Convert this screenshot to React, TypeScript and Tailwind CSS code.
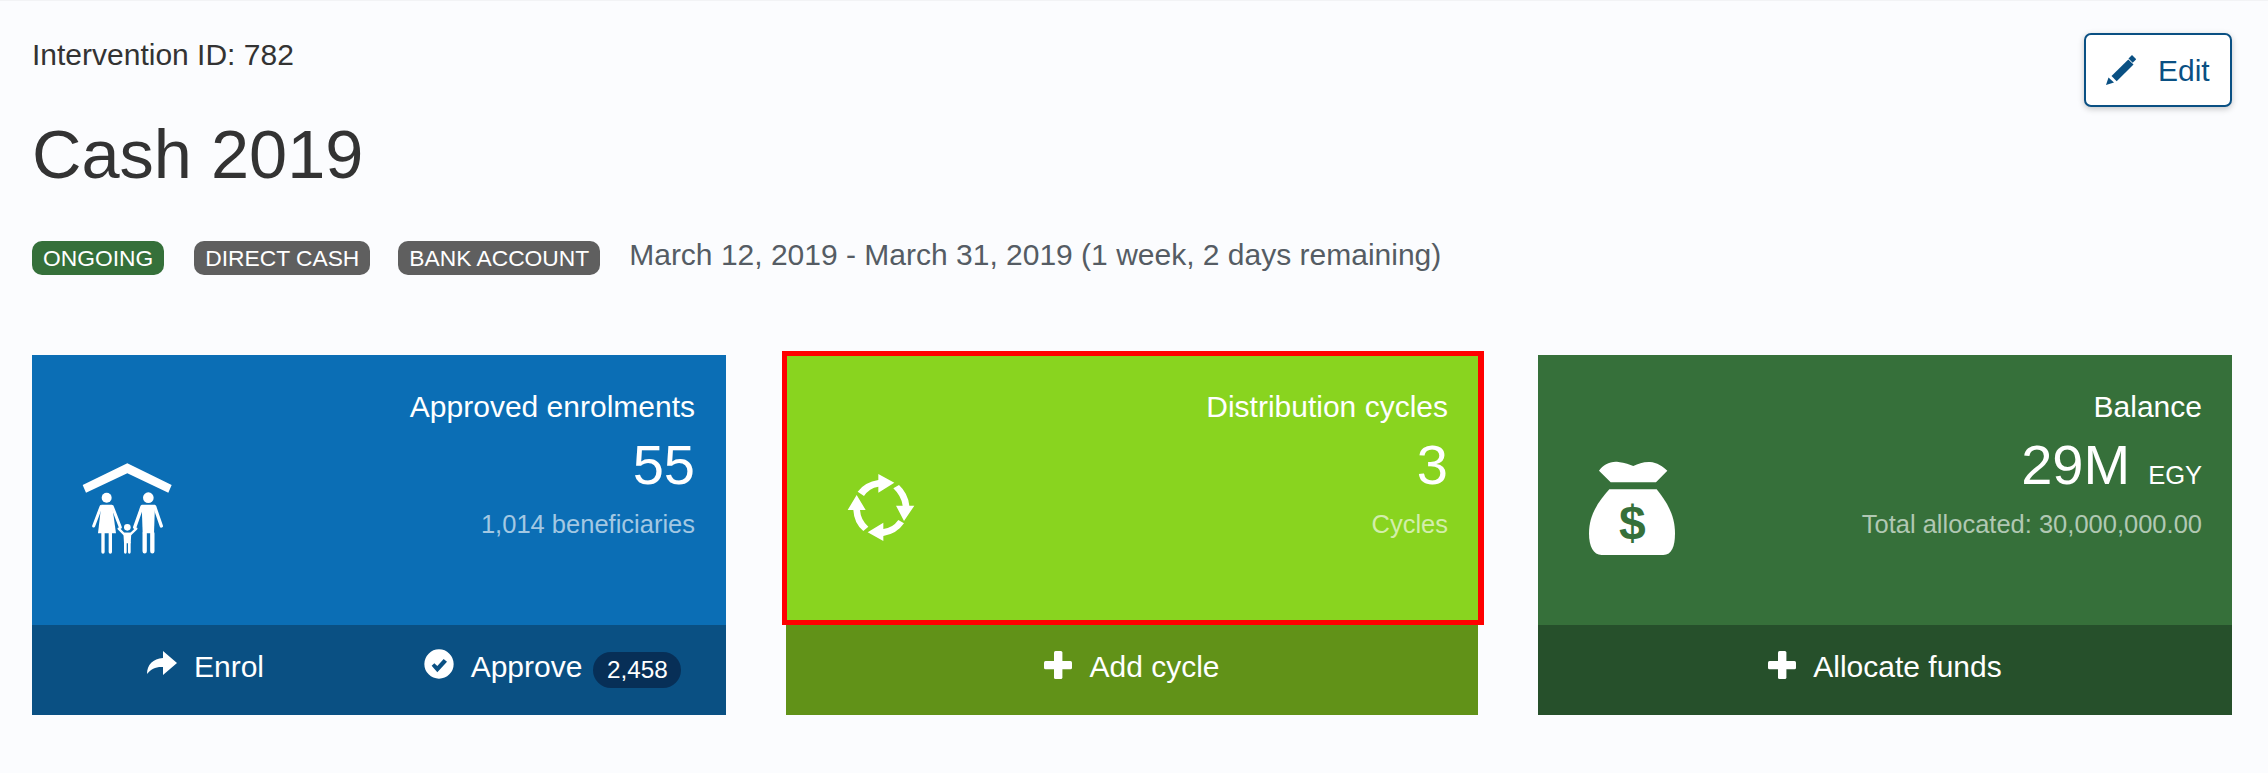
import React from 'react';

function PencilIcon() {
  return (
    <svg viewBox="0 0 30 30" className="h-[30px] w-[30px] fill-[#0a5083]">
      <path d="M0 30 L2.5 22.5 L8 27.5 Z" />
      <path d="M5.5 21 L22.3 4.5 L27.5 9.5 L10.7 26.2 Z" />
      <path d="M22.5 3.5 L26 0 L30.2 4.2 L26.7 7.8 Z" />
    </svg>
  );
}

function ShareIcon() {
  return (
    <svg viewBox="0 0 30 24" className="mb-[14px] h-[24px] w-[30px] fill-white">
      <path d="M30 12 L16 0 L16 7 C6 7.5 0 14 0 23 C4 18 9 15.5 16 16 L16 24 Z" />
    </svg>
  );
}

function CheckCircleIcon() {
  return (
    <svg viewBox="0 0 90 90" className="mb-[12px] h-[30px] w-[30px] fill-white">
      <path
        fillRule="evenodd"
        d="M45 1 A44 44 0 1 1 45 89 A44 44 0 1 1 45 1 Z M23 50 L31 43 L40 51 L59 30 L69 38 L40 70 Z"
      />
    </svg>
  );
}

function PlusIcon() {
  return (
    <svg viewBox="0 0 28 28" className="mb-[10px] h-[28px] w-[28px] fill-white">
      <rect x="10" y="0" width="8.4" height="28" rx="1.5" />
      <rect x="0" y="10" width="28" height="8.2" rx="1.5" />
    </svg>
  );
}

function FamilyIcon() {
  return (
    <svg viewBox="0 0 390 360" className="h-[120px] w-[130px] fill-white stroke-white">
      <path strokeWidth="0" d="M68 105 L202 40 L335 105 L325 128 L202 70 L78 128 Z" />
      {/* woman */}
      <circle cx="140" cy="143" r="15" strokeWidth="0" />
      <path strokeWidth="0" d="M124 164 L156 164 L168 250 L114 250 Z" />
      <path fill="none" strokeWidth="9" strokeLinecap="round" d="M123 170 L101 228 M157 170 L181 232" />
      <path fill="none" strokeWidth="10" strokeLinecap="round" d="M129 250 L129 306 M151 250 L151 306" />
      {/* man */}
      <circle cx="265" cy="143" r="16" strokeWidth="0" />
      <path strokeWidth="0" d="M245 164 L285 164 L282 250 L248 250 Z" />
      <path fill="none" strokeWidth="10" strokeLinecap="round" d="M246 170 L224 232 M284 170 L304 228" />
      <path fill="none" strokeWidth="13" strokeLinecap="round" d="M254 250 L254 304 M277 250 L277 304" />
      {/* child */}
      <circle cx="202" cy="232" r="10" strokeWidth="0" />
      <path fill="none" strokeWidth="7" strokeLinecap="round" d="M176 236 L192 252 L212 252 L229 236" />
      <path strokeWidth="0" d="M190 248 L214 248 L212 280 L192 280 Z" />
      <path fill="none" strokeWidth="8" strokeLinecap="round" d="M196 278 L196 307 M208 278 L208 307" />
    </svg>
  );
}

function CycleIcon() {
  return (
    <svg viewBox="0 0 330 300" className="h-[100px] w-[110px] fill-white">
      <path d="M83 95 Q105 66 145 60 L145 42 L193 68 L145 98 L145 80 Q118 84 102 108 Z" />
      <path d="M207 75 Q234 100 238 137 L253 137 L222 183 L198 137 L218 137 Q214 108 190 85 Z" />
      <path d="M222 190 Q200 222 160 228 L160 243 L113 217 L160 188 L160 207 Q188 204 205 180 Z" />
      <path d="M100 213 Q72 190 70 150 L53 150 L80 105 L107 150 L90 150 Q92 180 115 200 Z" />
    </svg>
  );
}

function MoneyBagIcon() {
  return (
    <svg viewBox="0 0 360 360" className="h-[120px] w-[120px] fill-white">
      <path d="M72 62 C85 45 105 33 130 36 C150 38 165 44 175 48 C190 42 205 35 225 36 C245 37 265 50 277 62 L243 97 L107 97 Z" />
      <path d="M103 118 L245 118 C270 150 300 190 300 250 C300 290 290 315 265 315 L80 315 C55 315 42 290 42 250 C42 190 75 150 103 118 Z" />
      <text x="172" y="268" textAnchor="middle" fontSize="144" fontWeight="700" fontFamily="'Liberation Sans', Arial, sans-serif" fill="#36703a">
        $
      </text>
    </svg>
  );
}

export default function App() {
  return (
    <div className="min-h-screen border-t border-[#f2f3f5] bg-[#fbfcfe] pl-[32px] pt-[32px] font-['Liberation_Sans',Arial,sans-serif] text-[#333333]">
      <div className="flex w-[2200px] items-start justify-between">
        <div className="pt-[2px]">
          <div className="text-[30px] leading-[40px]">Intervention ID: 782</div>
          <h1 className="mt-[40px] text-[68.5px] leading-[80px]">Cash 2019</h1>
          <div className="mt-[40px] flex items-start">
            <span className="mt-[6px] flex h-[34px] items-center rounded-[10px] bg-[#35703a] px-[11px] text-[22.8px] text-white">ONGOING</span>
            <span className="ml-[30px] mt-[6px] flex h-[34px] items-center rounded-[10px] bg-[#5f5f5f] px-[11px] text-[22.8px] text-white">DIRECT CASH</span>
            <span className="ml-[28px] mt-[6px] flex h-[34px] items-center rounded-[10px] bg-[#5f5f5f] px-[11px] text-[22.8px] text-white">BANK ACCOUNT</span>
            <span className="ml-[29px] text-[30px] leading-[40px] text-[#555c64]">March 12, 2019 - March 31, 2019 (1 week, 2 days remaining)</span>
          </div>
        </div>
        <button className="flex h-[74px] w-[148px] items-center rounded-[7px] border-2 border-[#0a5083] bg-white pl-[20px] text-[30px] text-[#0a5083] shadow-[0_2px_6px_rgba(0,0,0,0.22)]">
          <PencilIcon />
          <span className="ml-[22px]">Edit</span>
        </button>
      </div>

      <div className="mt-[80px] flex w-[2200px] gap-[60px]">
        {/* Enrolments */}
        <div className="w-[694px]">
          <div className="flex h-[270px] justify-between bg-[#0b6eb5] pr-[31px] pt-[32px] text-white">
            <div className="ml-[28px] mt-[63px]">
              <FamilyIcon />
            </div>
            <div className="text-right">
              <div className="text-[30px] leading-[40px]">Approved enrolments</div>
              <div className="mt-[8px] text-[56px] leading-[60px]">55</div>
              <div className="mt-[12px] text-[25.5px] leading-[34px] text-[#a3c8e3]">1,014 beneficiaries</div>
            </div>
          </div>
          <div className="flex h-[90px] bg-[#0a5083] text-[30px] text-white">
            <div className="flex flex-1 items-center justify-center">
              <ShareIcon />
              <span className="mb-[8px] ml-[17px]">Enrol</span>
            </div>
            <div className="flex flex-1 items-center justify-center">
              <CheckCircleIcon />
              <span className="mb-[8px] ml-[17px]">Approve</span>
              <span className="ml-[11px] flex h-[36px] w-[88px] items-center justify-center rounded-full bg-[#072f57] text-[24.3px]">2,458</span>
            </div>
          </div>
        </div>

        {/* Cycles */}
        <div className="w-[692px]">
          <div className="relative flex h-[270px] justify-between bg-[#89d41f] pr-[23px] pt-[32px] text-white">
            <div className="ml-[44px] mt-[73px]">
              <CycleIcon />
            </div>
            <div className="pr-[7px] text-right">
              <div className="text-[30px] leading-[40px]">Distribution cycles</div>
              <div className="mt-[8px] text-[56px] leading-[60px]">3</div>
              <div className="mt-[12px] text-[25.5px] leading-[34px] text-[#d3eeab]">Cycles</div>
            </div>
            {/* red highlight box laid over the card */}
            <div className="absolute -left-[4px] -right-[6px] -top-[4px] bottom-0 border-b-[5px] border-l-[5px] border-r-[6px] border-t-[5px] border-[#ff0000]" />
          </div>
          <div className="flex h-[90px] items-center justify-center bg-[#619218] text-[30px] text-white">
            <PlusIcon />
            <span className="mb-[8px] ml-[17px]">Add cycle</span>
          </div>
        </div>

        {/* Balance */}
        <div className="w-[694px]">
          <div className="flex h-[270px] justify-between bg-[#36703a] pr-[30px] pt-[32px] text-white">
            <div className="ml-[37px] mt-[63px]">
              <MoneyBagIcon />
            </div>
            <div className="text-right">
              <div className="text-[30px] leading-[40px]">Balance</div>
              <div className="mt-[8px] flex items-baseline justify-end text-[56px] leading-[60px]">
                29M<span className="ml-[18px] text-[25.5px] leading-[34px]">EGY</span>
              </div>
              <div className="mt-[12px] text-[25.5px] leading-[34px] text-[#b1c8b3]">Total allocated: 30,000,000.00</div>
            </div>
          </div>
          <div className="flex h-[90px] items-center justify-center bg-[#26502b] text-[30px] text-white">
            <PlusIcon />
            <span className="mb-[8px] ml-[17px]">Allocate funds</span>
          </div>
        </div>
      </div>
    </div>
  );
}
